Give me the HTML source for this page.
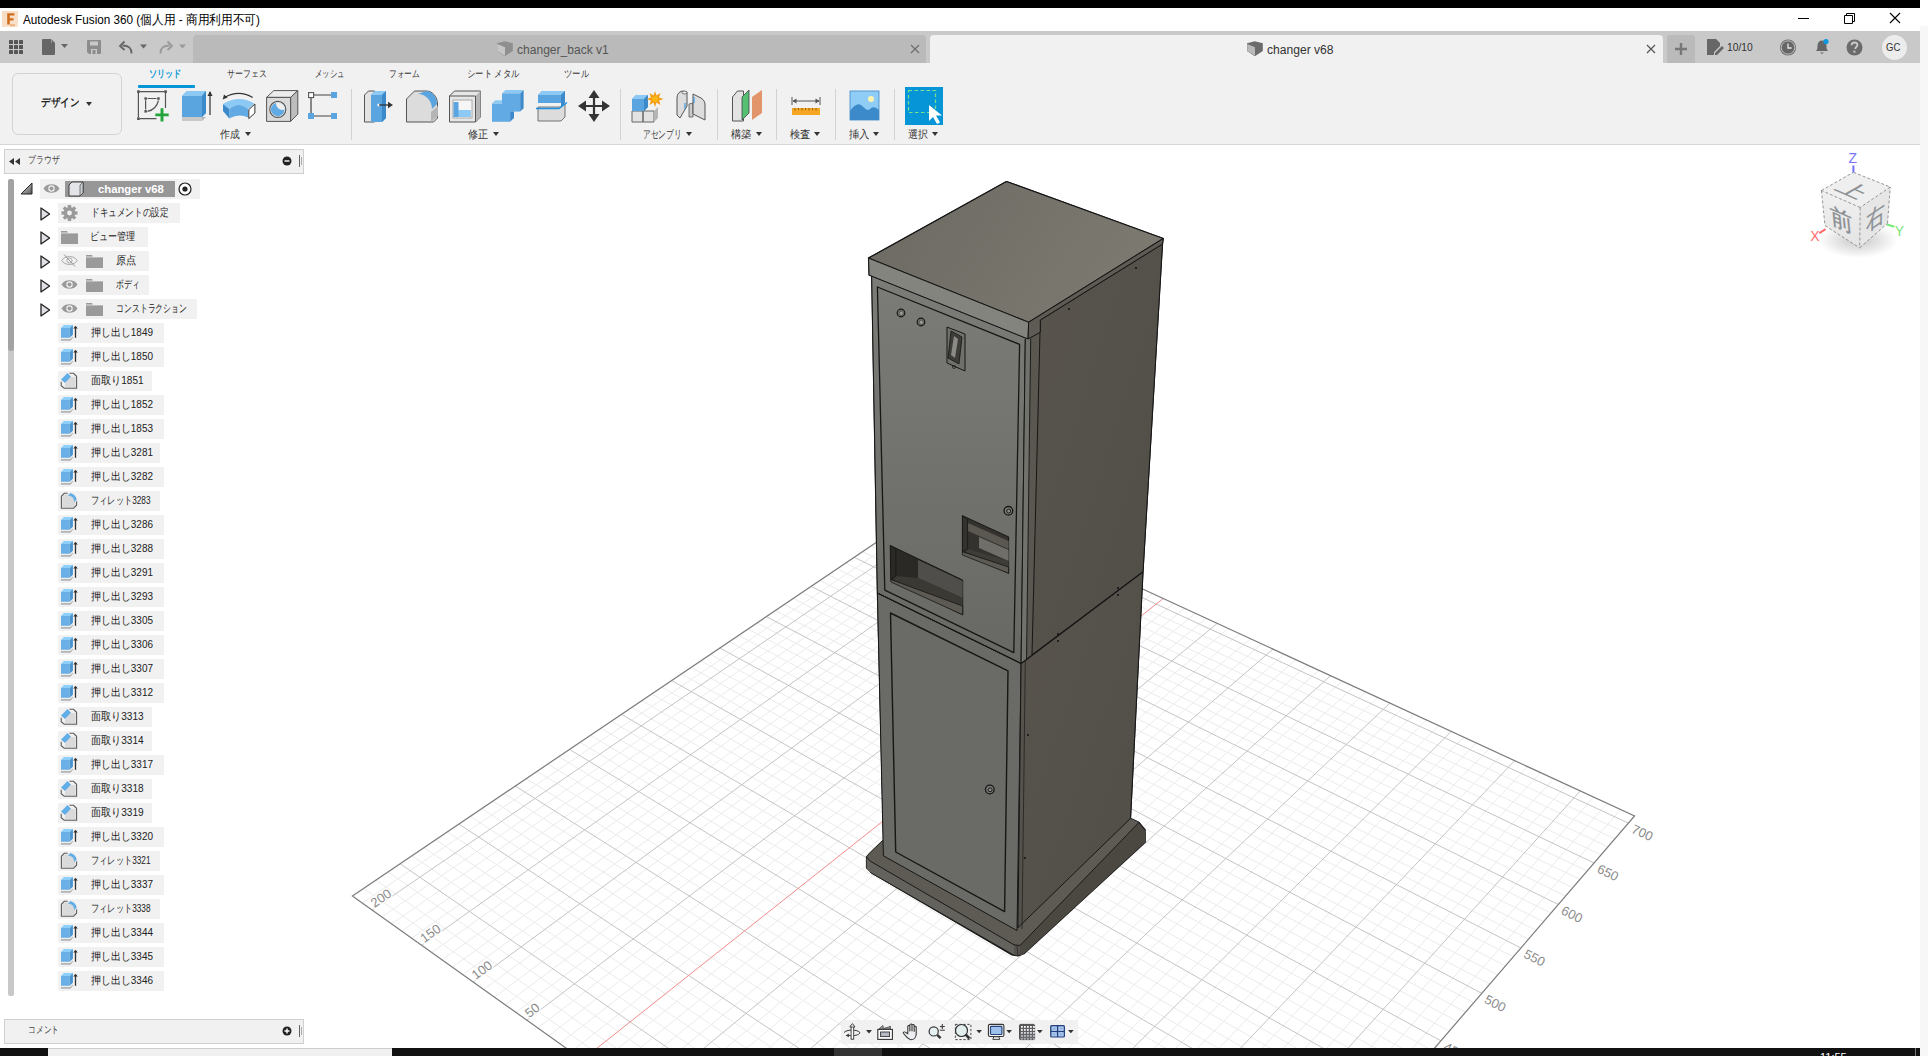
<!DOCTYPE html><html><head><meta charset="utf-8"><style>
*{margin:0;padding:0;box-sizing:border-box}
html,body{width:1928px;height:1056px;overflow:hidden;background:#f7f7f7;font-family:"Liberation Sans",sans-serif;color:#222}
.a{position:absolute}
.t{position:absolute;white-space:nowrap;line-height:1}
svg{position:absolute;overflow:visible}
</style></head><body>

<div class="a" style="left:0;top:0;width:1920px;height:8px;background:#000"></div>
<div class="a" style="left:1920px;top:0;width:8px;height:26px;background:#fff"></div>
<div class="a" style="left:0;top:8px;width:1920px;height:23px;background:#fff"></div>
<svg style="left:2px;top:11px" width="16" height="16"><defs><linearGradient id="fg" x1="0" y1="0" x2="1" y2="1"><stop offset="0" stop-color="#f8dcc2"/><stop offset="1" stop-color="#f9e3cf"/></linearGradient></defs><rect width="16" height="16" fill="url(#fg)"/><path d="M5.2 2.2h7.2v2.4H7.8v2.6h3.7v2.3H7.8v4H5.2z" fill="#cf6d1e"/><rect x="8" y="13.2" width="5" height="2" fill="#f0b27a"/></svg>
<div class="t" id="t0" style="left:23px;top:12.5px;font-size:13px;color:#000;font-weight:normal;transform-origin:0 0;transform:scaleX(0.9012);">Autodesk Fusion 360 (個人用 - 商用利用不可)</div>
<svg style="left:1790px;top:10px" width="120" height="18"><path d="M8 8.5h11" stroke="#000" stroke-width="1"/><path d="M54.5 5.5h8v8h-8z M56.5 5.5v-2h8v8h-2" stroke="#000" fill="none" stroke-width="1"/><path d="M100 3l10 10M110 3l-10 10" stroke="#000" stroke-width="1.1"/></svg>
<div class="a" style="left:0;top:31px;width:1920px;height:32px;background:#c9c9c9"></div>
<svg style="left:9px;top:40px" width="14" height="14"><rect x="0" y="0" width="4" height="4" rx="0.6" fill="#555"/><rect x="0" y="5" width="4" height="4" rx="0.6" fill="#555"/><rect x="0" y="10" width="4" height="4" rx="0.6" fill="#555"/><rect x="5" y="0" width="4" height="4" rx="0.6" fill="#555"/><rect x="5" y="5" width="4" height="4" rx="0.6" fill="#555"/><rect x="5" y="10" width="4" height="4" rx="0.6" fill="#555"/><rect x="10" y="0" width="4" height="4" rx="0.6" fill="#555"/><rect x="10" y="5" width="4" height="4" rx="0.6" fill="#555"/><rect x="10" y="10" width="4" height="4" rx="0.6" fill="#555"/></svg>
<svg style="left:42px;top:39px" width="30" height="17"><path d="M0 1a1 1 0 0 1 1-1h8l4 4v11a1 1 0 0 1-1 1H1a1 1 0 0 1-1-1z" fill="#666"/><path d="M9 0v4h4" fill="#c9c9c9"/><path d="M9.5 0.5l3.5 3.5h-3.5z" fill="#666"/><path d="M19 5h7l-3.5 4z" fill="#666"/></svg>
<svg style="left:87px;top:40px" width="14" height="14"><path d="M0 1a1 1 0 0 1 1-1h12a1 1 0 0 1 1 1v12a1 1 0 0 1-1 1H2l-2-2z" fill="#8c8c8c"/><rect x="3" y="1.5" width="8" height="4" fill="#c9c9c9"/><rect x="4" y="9" width="6" height="5" fill="#c9c9c9"/><rect x="5.5" y="10" width="3" height="4" fill="#8c8c8c"/></svg>
<svg style="left:119px;top:40px" width="30" height="15"><path d="M12.5 13.5c0-6-3-8-9-8" stroke="#666" stroke-width="1.8" fill="none"/><path d="M5.5 1.5l-4.5 4.5 4.5 4" stroke="#666" stroke-width="1.8" fill="none"/><path d="M21 4.5h7l-3.5 4z" fill="#666"/></svg>
<svg style="left:159px;top:40px" width="30" height="15"><path d="M1.5 13.5c0-6 3-8 9-8" stroke="#999" stroke-width="1.8" fill="none"/><path d="M8.5 1.5l4.5 4.5-4.5 4" stroke="#999" stroke-width="1.8" fill="none"/><path d="M20 4.5h7l-3.5 4z" fill="#999"/></svg>
<div class="a" style="left:193px;top:35px;width:733px;height:28px;background:#bababa;border-radius:4px 4px 0 0"></div>
<svg style="left:496px;top:41px" width="18" height="16"><path d="M1 2.3L8.8 0.2 16.8 2.3V10L8.8 15.2 1 10z" fill="#8f8f8f"/><path d="M1.2 2.9L9 6.2V14.8L1.2 9.9z" fill="#c6c6c6"/></svg>
<div class="t" id="t1" style="left:516.5px;top:44px;font-size:12.5px;color:#555;font-weight:normal;transform-origin:0 0;transform:scaleX(0.9643);">changer_back v1</div>
<svg style="left:910px;top:44px" width="10" height="10"><path d="M1 1l8 8M9 1l-8 8" stroke="#6e6e6e" stroke-width="1.2"/></svg>
<div class="a" style="left:930px;top:35px;width:733px;height:29px;background:#f1f1f1;border-radius:4px 4px 0 0"></div>
<svg style="left:1246px;top:41px" width="18" height="16"><path d="M1 2.3L8.8 0.2 16.8 2.3V10L8.8 15.2 1 10z" fill="#6b6b6b"/><path d="M1.2 2.9L9 6.2V14.8L1.2 9.9z" fill="#b9b9b9"/></svg>
<div class="t" id="t2" style="left:1266.5px;top:44px;font-size:12.5px;color:#333;font-weight:normal;transform-origin:0 0;transform:scaleX(0.9664);">changer v68</div>
<svg style="left:1646px;top:44px" width="10" height="10"><path d="M1 1l8 8M9 1l-8 8" stroke="#555" stroke-width="1.2"/></svg>
<div class="a" style="left:1667px;top:35px;width:28px;height:28px;background:#bababa;border-radius:3px 3px 0 0"></div>
<svg style="left:1674px;top:42px" width="14" height="14"><path d="M7 1v12M1 7h12" stroke="#777" stroke-width="2.4"/></svg>
<svg style="left:1707px;top:39px" width="18" height="17"><path d="M0 0h9l4 4v3l-6 6v3H0z" fill="#666"/><path d="M8 14l7-7 2 2-7 7h-2z" fill="#666"/></svg>
<div class="t" id="t3" style="left:1726.8px;top:42px;font-size:11.5px;color:#333;font-weight:normal;transform-origin:0 0;transform:scaleX(0.8929);">10/10</div>
<svg style="left:1779px;top:39px" width="18" height="18"><circle cx="9" cy="8.5" r="8" fill="#666"/><circle cx="9" cy="8.5" r="6.7" fill="none" stroke="#d8d8d8" stroke-width="0.8"/><path d="M9 4.5V9h3.6" stroke="#e6e6e6" stroke-width="1.3" fill="none"/></svg>
<svg style="left:1813px;top:38px" width="18" height="18"><path d="M3 13c1.5-1.5 1.5-3 1.5-5.5 0-3 2-5 4.5-5s4.5 2 4.5 5c0 2.5 0 4 1.5 5.5z" fill="#666"/><path d="M7 14.5h4l-2 1.5z" fill="#666"/><circle cx="13" cy="3.5" r="2.6" fill="#0b98de"/></svg>
<svg style="left:1846px;top:39px" width="17" height="17"><circle cx="8.5" cy="8.5" r="8" fill="#6b6b6b"/><path d="M5.6 6.3c0-1.8 1.3-2.8 2.9-2.8s2.9 1 2.9 2.6c0 1.8-2.2 2-2.2 3.9" stroke="#c9c9c9" stroke-width="1.8" fill="none"/><rect x="7.4" y="11.6" width="2" height="2" fill="#c9c9c9"/></svg>
<div class="a" style="left:1882px;top:35px;width:25px;height:25px;border-radius:50%;background:#ececec"></div>
<div class="t" id="t4" style="left:1885.7px;top:42px;font-size:11.5px;color:#333;font-weight:normal;transform-origin:0 0;transform:scaleX(0.8290);">GC</div>
<div class="a" style="left:0;top:63px;width:1920px;height:81px;background:#f1f1f1"></div>
<div class="a" style="left:0;top:144px;width:1920px;height:1px;background:#d6d6d6"></div>
<div class="a" style="left:12px;top:73px;width:110px;height:62px;border:1.5px solid #d4d4d4;border-radius:6px"></div>
<div class="t" id="t5" style="left:41.4px;top:97px;font-size:11px;color:#222;font-weight:bold;transform-origin:0 0;transform:scaleX(0.8636);">デザイン</div>
<svg style="left:85.5px;top:102px" width="8" height="5"><path d="M0 0h6l-3 4z" fill="#333"/></svg>
<div class="t" id="t6" style="left:149.4px;top:69px;font-size:10px;color:#0696d7;font-weight:bold;transform-origin:0 0;transform:scaleX(0.8150);">ソリッド</div>
<div class="t" id="t7" style="left:227.4px;top:69px;font-size:10px;color:#333;font-weight:normal;transform-origin:0 0;transform:scaleX(0.7920);">サーフェス</div>
<div class="t" id="t8" style="left:315px;top:69px;font-size:10px;color:#333;font-weight:normal;transform-origin:0 0;transform:scaleX(0.7375);">メッシュ</div>
<div class="t" id="t9" style="left:388.5px;top:69px;font-size:10px;color:#333;font-weight:normal;transform-origin:0 0;transform:scaleX(0.7725);">フォーム</div>
<div class="t" id="t10" style="left:466.8px;top:69px;font-size:10px;color:#333;font-weight:normal;transform-origin:0 0;transform:scaleX(0.8315);">シート メタル</div>
<div class="t" id="t11" style="left:564px;top:69px;font-size:10px;color:#333;font-weight:normal;transform-origin:0 0;transform:scaleX(0.8333);">ツール</div>
<div class="a" style="left:138px;top:85px;width:57px;height:3px;background:#0696d7;border-radius:1px"></div>
<div class="a" style="left:351px;top:89px;width:1px;height:51px;background:#d2d2d2"></div>
<div class="a" style="left:620px;top:89px;width:1px;height:51px;background:#d2d2d2"></div>
<div class="a" style="left:717px;top:89px;width:1px;height:51px;background:#d2d2d2"></div>
<div class="a" style="left:776px;top:89px;width:1px;height:51px;background:#d2d2d2"></div>
<div class="a" style="left:835px;top:89px;width:1px;height:51px;background:#d2d2d2"></div>
<div class="a" style="left:894px;top:89px;width:1px;height:51px;background:#d2d2d2"></div>
<div class="t" id="t12" style="left:220.3px;top:129px;font-size:11px;color:#333;font-weight:normal;transform-origin:0 0;transform:scaleX(0.8955);">作成</div>
<svg style="left:244.6px;top:132px" width="8" height="5"><path d="M0 0h6l-3 4z" fill="#333"/></svg>
<div class="t" id="t13" style="left:467.6px;top:129px;font-size:11px;color:#333;font-weight:normal;transform-origin:0 0;transform:scaleX(0.9182);">修正</div>
<svg style="left:492.5px;top:132px" width="8" height="5"><path d="M0 0h6l-3 4z" fill="#333"/></svg>
<div class="t" id="t14" style="left:643px;top:129px;font-size:11px;color:#333;font-weight:normal;transform-origin:0 0;transform:scaleX(0.7036);">アセンブリ</div>
<svg style="left:685.6px;top:132px" width="8" height="5"><path d="M0 0h6l-3 4z" fill="#333"/></svg>
<div class="t" id="t15" style="left:730.8px;top:129px;font-size:11px;color:#333;font-weight:normal;transform-origin:0 0;transform:scaleX(0.9364);">構築</div>
<svg style="left:755.5px;top:132px" width="8" height="5"><path d="M0 0h6l-3 4z" fill="#333"/></svg>
<div class="t" id="t16" style="left:789.8px;top:129px;font-size:11px;color:#333;font-weight:normal;transform-origin:0 0;transform:scaleX(0.9409);">検査</div>
<svg style="left:814.0px;top:132px" width="8" height="5"><path d="M0 0h6l-3 4z" fill="#333"/></svg>
<div class="t" id="t17" style="left:849px;top:129px;font-size:11px;color:#333;font-weight:normal;transform-origin:0 0;transform:scaleX(0.9364);">挿入</div>
<svg style="left:873.0px;top:132px" width="8" height="5"><path d="M0 0h6l-3 4z" fill="#333"/></svg>
<div class="t" id="t18" style="left:907.8px;top:129px;font-size:11px;color:#333;font-weight:normal;transform-origin:0 0;transform:scaleX(0.9091);">選択</div>
<svg style="left:931.8px;top:132px" width="8" height="5"><path d="M0 0h6l-3 4z" fill="#333"/></svg>
<svg style="left:137px;top:90px" width="34" height="34">
<g stroke="#555" stroke-width="1.2" fill="none"><path d="M3 1.6H27M1.4 3V27M3 28.6H19.5M28.5 3V18"/><path d="M10.5 8.5H19.5M8.6 10.2V19.5M10.5 21.3Q19 20 21.5 10.5"/></g>
<g fill="#555"><rect x="0.1" y="0.3" width="2.7" height="2.7"/><rect x="27.2" y="0.3" width="2.7" height="2.7"/><rect x="0.1" y="27.3" width="2.7" height="2.7"/>
<rect x="7.4" y="7.3" width="2.5" height="2.5"/><rect x="20.2" y="7.3" width="2.5" height="2.5"/><rect x="7.4" y="20.1" width="2.5" height="2.5"/></g>
<path d="M25 18.2v13.4M18.3 24.9h13.4" stroke="#22a43a" stroke-width="2.9"/></svg>
<svg style="left:181px;top:90px" width="32" height="33">
<path d="M1 27l3 4h17l4-4z" fill="#b5b5b5"/><path d="M1 27h20v4H1z" fill="#c9c9c9"/>
<path d="M1 6l5-5h19v22l-4 4H1z" fill="#5aa5e0"/><path d="M1 6l5-5h19l-4 5z" fill="#8ccaf5"/><path d="M21 6l4-5v22l-4 4z" fill="#3d8acb"/>
<path d="M29 2v23" stroke="#333" stroke-width="1.2"/><path d="M26.5 6l2.5-5 2.5 5z" fill="#333"/></svg>
<svg style="left:223px;top:92px" width="34" height="30">
<path d="M2 5.2Q15.7 -2.5 29.7 5.4" stroke="#333" stroke-width="1.1" fill="none"/><path d="M-0.3 7.6L1 2.6 4.6 5.6z" fill="#333"/>
<path d="M0 12Q15.7 2.5 31.3 11.5L25.2 17Q15.7 9 6.3 17Z" fill="#8ccaf5"/>
<path d="M6.3 17Q15.7 9 25.2 17V25.5Q15.7 21 6.3 26.6Z" fill="#62aae3"/>
<path d="M0 12L6.3 17V26.6L0 19Z" fill="#3d8acb"/>
<path d="M25.8 17.6L31.9 12V21L25.8 26.6Z" fill="#fff" stroke="#333" stroke-width="1"/></svg>
<svg style="left:266px;top:90px" width="33" height="33">
<path d="M0.6 7.4L7.8 0.6H31.8L24.6 7.4Z" fill="#ececec" stroke="#555" stroke-width="1" stroke-linejoin="round"/>
<path d="M24.6 7.4L31.8 0.6V24.2L24.6 31.4Z" fill="#bdbdbd" stroke="#555" stroke-width="1" stroke-linejoin="round"/>
<path d="M0.6 7.4H24.6V31.4H0.6Z" fill="#dadada" stroke="#555" stroke-width="1" stroke-linejoin="round"/>
<defs><clipPath id="hc"><circle cx="11.8" cy="19.4" r="7"/></clipPath></defs>
<circle cx="11.8" cy="19.4" r="8" fill="#eee" stroke="#555" stroke-width="1.1"/>
<g clip-path="url(#hc)"><circle cx="11.8" cy="19.4" r="7" fill="#62aae3"/><circle cx="16.5" cy="13.5" r="6.5" fill="#eee"/></g></svg>
<svg style="left:308px;top:92px" width="30" height="28">
<path d="M6 3h17M3 6v15M6 24h17" stroke="#444" stroke-width="1.2"/>
<rect x="0.6" y="0.6" width="5" height="5" fill="#fff" stroke="#555" stroke-width="1.1"/><rect x="23" y="0" width="6" height="6" fill="#5aa5e0"/>
<rect x="0" y="21" width="6" height="6" fill="#5aa5e0"/><rect x="23" y="21" width="6" height="6" fill="#5aa5e0"/></svg>
<svg style="left:364px;top:90px" width="30" height="33">
<path d="M0.5 5l4-4h6v31h-10z" fill="#e3e3e3" stroke="#555" stroke-width="1"/>
<path d="M7 5l4-4h11v27l-4 4H7z" fill="#5aa5e0"/><path d="M7 5l4-4h11l-4 4z" fill="#8ccaf5"/><path d="M18 5l4-4v27l-4 4z" fill="#3d8acb"/>
<rect x="13.5" y="13.8" width="2.5" height="2.4" fill="#fff"/><path d="M15 15h11" stroke="#333" stroke-width="1.3"/><path d="M24 11.8l5 3.2-5 3.2z" fill="#333"/></svg>
<svg style="left:406px;top:90px" width="33" height="33">
<path d="M0.5 9l8-8h12c6 0 11 6 11 13v14l-4 4H0.5z" fill="#dcdcdc" stroke="#555" stroke-width="1"/>
<path d="M25 32l7-6V16l-7 6z" fill="#b5b5b5"/>
<path d="M12 4l8-3c6 0 11 6 11 13l-5 5c0-8-6-15-14-15z" fill="#5aa5e0"/></svg>
<svg style="left:449px;top:90px" width="33" height="33">
<path d="M0.5 6l5-5h26v26l-5 5H0.5z" fill="#e6e6e6" stroke="#555" stroke-width="1"/>
<path d="M26.5 6l5-5v26l-5 5z" fill="#b5b5b5"/><path d="M0.5 6h26v26" fill="none" stroke="#555" stroke-width="1"/>
<rect x="4" y="10" width="19" height="18" fill="#f6f6f6" stroke="#999" stroke-width="0.8"/>
<path d="M4.5 12h5v8h12v7h-17z" fill="#5aa5e0"/><path d="M9.5 20h12v7H9.5z" fill="#8ccaf5"/></svg>
<svg style="left:492px;top:90px" width="33" height="33">
<path d="M10 3.4L13.4 0H31.6L28.2 3.4Z" fill="#8ccaf5"/><path d="M10 3.4H28.2V21.6H10Z" fill="#62aae3"/><path d="M28.2 3.4L31.6 0V18.2L28.2 21.6Z" fill="#3d8acb"/>
<path d="M0 13.6L3.4 10.2H10V13.6Z" fill="#8ccaf5"/><path d="M0 13.6H18.1V31.8H0Z" fill="#62aae3"/><path d="M18.1 21.6H22V28L18.1 31.8Z" fill="#3d8acb"/></svg>
<svg style="left:536px;top:90px" width="32" height="33">
<path d="M2 5l4-4h23v12H2z" fill="#5aa5e0"/><path d="M2 5l4-4h23l-4 4z" fill="#8ccaf5"/><path d="M25 5l4-4v12l-4 4z" fill="#3d8acb"/>
<path d="M2 17h23l4-3v13l-4 4H2z" fill="#dcdcdc" stroke="#555" stroke-width="0.8"/>
<path d="M0 18.5h23l8-6" stroke="#1d8fe0" stroke-width="1.5" fill="none"/></svg>
<svg style="left:578px;top:90px" width="32" height="32">
<path d="M16 3v26M3 16h26" stroke="#333" stroke-width="2.2"/>
<path d="M16 0l-5.5 8h11zM16 32l-5.5-8h11zM0 16l8-5.5v11zM32 16l-8-5.5v11z" fill="#333"/></svg>
<svg style="left:631px;top:90px" width="33" height="33">
<path d="M1 21h11v11H1zM12 21h11v11H12z" fill="#e3e3e3" stroke="#666" stroke-width="1"/><path d="M23 21l4-4v11l-4 4z" fill="#b5b5b5"/>
<path d="M3 17l4-4h14l-4 4z" fill="#eee"/>
<path d="M1 9l4-4h12v12l-4 4H1z" fill="#5aa5e0"/><path d="M1 9l4-4h12l-4 4z" fill="#8ccaf5"/><path d="M13 9l4-4v12l-4 4z" fill="#3d8acb"/>
<path d="M24 1l1.5 4.5 4-2.5-1.5 4.5 4.5 1.5-4.5 1.5 1.5 4.5-4-2.5-1.5 4.5-1.5-4.5-4 2.5 1.5-4.5-4.5-1.5 4.5-1.5-1.5-4.5 4 2.5z" fill="#f39c12"/><circle cx="24" cy="9" r="3" fill="#fdb813"/></svg>
<svg style="left:676px;top:90px" width="31" height="33">
<path d="M1 25V8c0-4 2-6 5-7l5 1v14l-7 12z" fill="#ddd" stroke="#555" stroke-width="1"/><ellipse cx="8.5" cy="2.5" rx="2.5" ry="1.5" fill="#eee" stroke="#555" stroke-width="0.8"/>
<path d="M13 14l4-1v14h-4z" fill="#ccc" stroke="#555" stroke-width="0.8"/>
<path d="M17 4l8 4c3 2 4 4 4 7v15l-12-6z" fill="#ddd" stroke="#555" stroke-width="1"/>
<path d="M9 13v6M18 7v6" stroke="#1d8fe0" stroke-width="1"/></svg>
<svg style="left:732px;top:90px" width="32" height="33">
<path d="M0.5 7l5-6h6v30h-11z" fill="#e3e3e3" stroke="#555" stroke-width="1"/>
<path d="M10 30V7l7-7v23z" fill="#55bf72" stroke="#444" stroke-width="0.8"/>
<path d="M20 30V7l10-7v23z" fill="#e2956a"/></svg>
<svg style="left:791px;top:97px" width="31" height="19">
<path d="M1 0v8M29 0v8" stroke="#555" stroke-width="1"/><path d="M2 4h26" stroke="#555" stroke-width="1"/><path d="M1.5 4l4-2.5v5zM28.5 4l-4-2.5v5z" fill="#555"/>
<rect x="1" y="11" width="28" height="7" fill="#f5a623"/><path d="M4 11v2.5M7.5 11v2M11 11v2.5M14.5 11v2M18 11v2.5M21.5 11v2M25 11v2.5" stroke="#8a5a00" stroke-width="0.9"/></svg>
<svg style="left:850px;top:91px" width="30" height="30">
<rect x="0" y="0" width="29" height="29" fill="#8fcdf7" stroke="#3d8acb" stroke-width="0.8"/>
<path d="M0 29V20c4-6 8-8 11-6 3 2 6 7 9 4 3-3 6-2 9 1v10z" fill="#3d8acb"/><circle cx="21" cy="8" r="3" fill="#fff3b0"/></svg>
<svg style="left:905px;top:87px" width="39" height="39">
<rect x="0" y="0" width="38" height="38" fill="#0696d7"/>
<rect x="3.5" y="3.5" width="27" height="22" fill="none" stroke="#7be08f" stroke-width="1.2" stroke-dasharray="3.5 2.5"/>
<path d="M24 18v16l4-4 4 7 3-1.5-4-7h6z" fill="#fff"/></svg>
<div class="a" style="left:0;top:145px;width:1920px;height:903px;background:#fff"></div>
<div class="a" style="left:4px;top:149px;width:300px;height:25px;background:#f1f1f1;border:1px solid #cfcfcf"></div>
<svg style="left:9px;top:158px" width="12" height="8"><path d="M5 0v7L0 3.5zM11 0v7L6 3.5z" fill="#333"/></svg>
<div class="t" id="t19" style="left:28.4px;top:155px;font-size:10px;color:#444;font-weight:normal;transform-origin:0 0;transform:scaleX(0.7950);">ブラウザ</div>
<svg style="left:282px;top:156px" width="10" height="10"><circle cx="5" cy="5" r="4.5" fill="#222"/><path d="M2.5 5h5" stroke="#fff" stroke-width="1.4"/></svg>
<div class="a" style="left:299px;top:155px;width:1px;height:12px;background:#666"></div><div class="a" style="left:301px;top:157px;width:1px;height:8px;background:#aaa"></div>
<div class="a" style="left:4px;top:1019px;width:300px;height:25px;background:#f1f1f1;border:1px solid #cfcfcf"></div>
<div class="t" id="t20" style="left:28.3px;top:1025px;font-size:10px;color:#444;font-weight:normal;transform-origin:0 0;transform:scaleX(0.7750);">コメント</div>
<svg style="left:282px;top:1026px" width="10" height="10"><circle cx="5" cy="5" r="4.5" fill="#222"/><path d="M2.5 5h5M5 2.5v5" stroke="#fff" stroke-width="1.4"/></svg>
<div class="a" style="left:299px;top:1025px;width:1px;height:12px;background:#666"></div><div class="a" style="left:301px;top:1027px;width:1px;height:8px;background:#aaa"></div>
<div class="a" style="left:8px;top:179px;width:6px;height:817px;background:#c8c8c8;border-radius:2px"></div>
<div class="a" style="left:8px;top:179px;width:6px;height:172px;background:#a3a3a3;border-radius:3px"></div>
<div class="a" style="left:40px;top:179px;width:160px;height:20px;background:#f1f1f1"></div>
<svg style="left:20px;top:182px" width="13" height="13"><defs><linearGradient id="trg" x1="0" y1="0" x2="1" y2="1"><stop offset="0" stop-color="#e8e8e8"/><stop offset="1" stop-color="#555"/></linearGradient></defs><path d="M1 12h11V1z" fill="url(#trg)" stroke="#222" stroke-width="1"/></svg>
<svg style="left:43px;top:182px" width="18" height="13"><path d="M0.5 6.5C3 0.8 14 0.8 16.5 6.5 14 12.2 3 12.2 0.5 6.5z" fill="#9a9a9a"/><circle cx="8.5" cy="6.5" r="3.2" fill="#f1f1f1"/><circle cx="8.5" cy="6.5" r="2" fill="#9a9a9a"/></svg>
<div class="a" style="left:65px;top:181px;width:110px;height:16px;background:#979797"></div>
<svg style="left:68px;top:181px" width="17" height="16"><path d="M1 4l3-3h11v11l-3 3H1z" fill="#e2e4e8" stroke="#333" stroke-width="0.9"/><path d="M12 4l3-3v11l-3 3z" fill="#c9ccd2" stroke="#333" stroke-width="0.6"/></svg>
<div class="t" id="t21" style="left:97.9px;top:184px;font-size:11px;color:#fff;font-weight:bold;transform-origin:0 0;transform:scaleX(1.0264);">changer v68</div>
<svg style="left:178px;top:182px" width="14" height="14"><circle cx="7" cy="7" r="6" fill="#fff" stroke="#222" stroke-width="1.2"/><circle cx="7" cy="7" r="2.6" fill="#222"/></svg>
<svg style="left:40px;top:206.5px" width="12" height="14"><path d="M1 1l8.6 6-8.6 6z" fill="#dfe1e5" stroke="#222" stroke-width="1.3" stroke-linejoin="round"/></svg>
<div class="a" style="left:58px;top:203px;width:122px;height:20px;background:#f1f1f1"></div>
<svg style="left:61px;top:205px" width="17" height="17"><circle cx="8.5" cy="8" r="5.9" fill="#9a9a9a"/><rect x="6.8" y="0" width="3.4" height="4" transform="rotate(0 8.5 8)" fill="#9a9a9a"/><rect x="6.8" y="0" width="3.4" height="4" transform="rotate(45 8.5 8)" fill="#9a9a9a"/><rect x="6.8" y="0" width="3.4" height="4" transform="rotate(90 8.5 8)" fill="#9a9a9a"/><rect x="6.8" y="0" width="3.4" height="4" transform="rotate(135 8.5 8)" fill="#9a9a9a"/><rect x="6.8" y="0" width="3.4" height="4" transform="rotate(180 8.5 8)" fill="#9a9a9a"/><rect x="6.8" y="0" width="3.4" height="4" transform="rotate(225 8.5 8)" fill="#9a9a9a"/><rect x="6.8" y="0" width="3.4" height="4" transform="rotate(270 8.5 8)" fill="#9a9a9a"/><rect x="6.8" y="0" width="3.4" height="4" transform="rotate(315 8.5 8)" fill="#9a9a9a"/><circle cx="8.5" cy="8" r="2.4" fill="#f1f1f1"/></svg>
<div class="t" id="t22" style="left:91px;top:207px;font-size:11px;color:#222;font-weight:normal;transform-origin:0 0;transform:scaleX(0.7838);">ドキュメントの設定</div>
<svg style="left:40px;top:230.5px" width="12" height="14"><path d="M1 1l8.6 6-8.6 6z" fill="#dfe1e5" stroke="#222" stroke-width="1.3" stroke-linejoin="round"/></svg>
<div class="a" style="left:58px;top:227px;width:90px;height:20px;background:#f1f1f1"></div>
<svg style="left:61px;top:230px" width="17" height="14"><path d="M0 1h6l1 2h10v11H0z" fill="#9a9a9a"/><path d="M0 3h17" stroke="#f1f1f1" stroke-width="0.8"/></svg>
<div class="t" id="t23" style="left:90px;top:231px;font-size:11px;color:#222;font-weight:normal;transform-origin:0 0;transform:scaleX(0.8255);">ビュー管理</div>
<svg style="left:40px;top:254.5px" width="12" height="14"><path d="M1 1l8.6 6-8.6 6z" fill="#dfe1e5" stroke="#222" stroke-width="1.3" stroke-linejoin="round"/></svg>
<div class="a" style="left:58px;top:251px;width:91px;height:20px;background:#f1f1f1"></div>
<svg style="left:61px;top:254px" width="18" height="13"><path d="M0.8 6.5C3.5 1.2 13.5 1.2 16.2 6.5 13.5 11.8 3.5 11.8 0.8 6.5z" fill="none" stroke="#aaa" stroke-width="1"/><circle cx="8.5" cy="6.5" r="2.6" fill="none" stroke="#aaa" stroke-width="1"/><path d="M3 0.5l11 12" stroke="#999" stroke-width="1"/></svg>
<svg style="left:86px;top:254px" width="17" height="14"><path d="M0 1h6l1 2h10v11H0z" fill="#9a9a9a"/><path d="M0 3h17" stroke="#f1f1f1" stroke-width="0.8"/></svg>
<div class="t" id="t24" style="left:115.5px;top:255px;font-size:11px;color:#222;font-weight:normal;transform-origin:0 0;transform:scaleX(0.9318);">原点</div>
<svg style="left:40px;top:278.5px" width="12" height="14"><path d="M1 1l8.6 6-8.6 6z" fill="#dfe1e5" stroke="#222" stroke-width="1.3" stroke-linejoin="round"/></svg>
<div class="a" style="left:58px;top:275px;width:91px;height:20px;background:#f1f1f1"></div>
<svg style="left:61px;top:278px" width="18" height="13"><path d="M0.5 6.5C3 0.8 14 0.8 16.5 6.5 14 12.2 3 12.2 0.5 6.5z" fill="#9a9a9a"/><circle cx="8.5" cy="6.5" r="3.2" fill="#f1f1f1"/><circle cx="8.5" cy="6.5" r="2" fill="#9a9a9a"/></svg>
<svg style="left:86px;top:278px" width="17" height="14"><path d="M0 1h6l1 2h10v11H0z" fill="#9a9a9a"/><path d="M0 3h17" stroke="#f1f1f1" stroke-width="0.8"/></svg>
<div class="t" id="t25" style="left:115.5px;top:279px;font-size:11px;color:#222;font-weight:normal;transform-origin:0 0;transform:scaleX(0.7182);">ボディ</div>
<svg style="left:40px;top:302.5px" width="12" height="14"><path d="M1 1l8.6 6-8.6 6z" fill="#dfe1e5" stroke="#222" stroke-width="1.3" stroke-linejoin="round"/></svg>
<div class="a" style="left:58px;top:299px;width:139px;height:20px;background:#f1f1f1"></div>
<svg style="left:61px;top:302px" width="18" height="13"><path d="M0.5 6.5C3 0.8 14 0.8 16.5 6.5 14 12.2 3 12.2 0.5 6.5z" fill="#9a9a9a"/><circle cx="8.5" cy="6.5" r="3.2" fill="#f1f1f1"/><circle cx="8.5" cy="6.5" r="2" fill="#9a9a9a"/></svg>
<svg style="left:86px;top:302px" width="17" height="14"><path d="M0 1h6l1 2h10v11H0z" fill="#9a9a9a"/><path d="M0 3h17" stroke="#f1f1f1" stroke-width="0.8"/></svg>
<div class="t" id="t26" style="left:115.5px;top:303px;font-size:11px;color:#222;font-weight:normal;transform-origin:0 0;transform:scaleX(0.7172);">コンストラクション</div>
<div class="a" style="left:58px;top:323px;width:106px;height:20px;background:#f1f1f1"></div>
<svg style="left:61px;top:325px" width="18" height="17" overflow="visible"><path d="M0 14.1h9.2l2.7-2.5v1.2l-2.4 3H0z" fill="#b3b3b3"/><path d="M0 3h8.75v9.8H0z" fill="#6aafe6"/><path d="M0 3l2.9-3.1h9l-3.15 3.1z" fill="#8ccff8"/><path d="M8.75 3l3.15-3.1v9.6l-3.15 3.3z" fill="#4a95d0"/><path d="M14.5 2v10.8" stroke="#333" stroke-width="1.3"/><path d="M12.2 3.6l2.3-2.8 2.3 2.8z" fill="#333"/></svg>
<div class="t" id="t27" style="left:90.5px;top:327px;font-size:11px;color:#222;font-weight:normal;transform-origin:0 0;transform:scaleX(0.9053);">押し出し1849</div>
<div class="a" style="left:58px;top:347px;width:106px;height:20px;background:#f1f1f1"></div>
<svg style="left:61px;top:349px" width="18" height="17" overflow="visible"><path d="M0 14.1h9.2l2.7-2.5v1.2l-2.4 3H0z" fill="#b3b3b3"/><path d="M0 3h8.75v9.8H0z" fill="#6aafe6"/><path d="M0 3l2.9-3.1h9l-3.15 3.1z" fill="#8ccff8"/><path d="M8.75 3l3.15-3.1v9.6l-3.15 3.3z" fill="#4a95d0"/><path d="M14.5 2v10.8" stroke="#333" stroke-width="1.3"/><path d="M12.2 3.6l2.3-2.8 2.3 2.8z" fill="#333"/></svg>
<div class="t" id="t28" style="left:90.5px;top:351px;font-size:11px;color:#222;font-weight:normal;transform-origin:0 0;transform:scaleX(0.9053);">押し出し1850</div>
<div class="a" style="left:58px;top:371px;width:94px;height:20px;background:#f1f1f1"></div>
<svg style="left:61px;top:373px" width="18" height="17" overflow="visible"><path d="M4 14.5V10l6-6h4.6v10.5z" fill="#dadada"/><path d="M0.2 8.7V12.8L3.3 15.3H15.6V3.25L12.5 0.3H8.5" fill="none" stroke="#5c5c5c" stroke-width="1.1"/><path d="M0 6.4L6.5 0.1 10 3.7 4 9.9z" fill="#62ade6"/></svg>
<div class="t" id="t29" style="left:90.5px;top:375px;font-size:11px;color:#222;font-weight:normal;transform-origin:0 0;transform:scaleX(0.9168);">面取り1851</div>
<div class="a" style="left:58px;top:395px;width:106px;height:20px;background:#f1f1f1"></div>
<svg style="left:61px;top:397px" width="18" height="17" overflow="visible"><path d="M0 14.1h9.2l2.7-2.5v1.2l-2.4 3H0z" fill="#b3b3b3"/><path d="M0 3h8.75v9.8H0z" fill="#6aafe6"/><path d="M0 3l2.9-3.1h9l-3.15 3.1z" fill="#8ccff8"/><path d="M8.75 3l3.15-3.1v9.6l-3.15 3.3z" fill="#4a95d0"/><path d="M14.5 2v10.8" stroke="#333" stroke-width="1.3"/><path d="M12.2 3.6l2.3-2.8 2.3 2.8z" fill="#333"/></svg>
<div class="t" id="t30" style="left:90.5px;top:399px;font-size:11px;color:#222;font-weight:normal;transform-origin:0 0;transform:scaleX(0.9053);">押し出し1852</div>
<div class="a" style="left:58px;top:419px;width:106px;height:20px;background:#f1f1f1"></div>
<svg style="left:61px;top:421px" width="18" height="17" overflow="visible"><path d="M0 14.1h9.2l2.7-2.5v1.2l-2.4 3H0z" fill="#b3b3b3"/><path d="M0 3h8.75v9.8H0z" fill="#6aafe6"/><path d="M0 3l2.9-3.1h9l-3.15 3.1z" fill="#8ccff8"/><path d="M8.75 3l3.15-3.1v9.6l-3.15 3.3z" fill="#4a95d0"/><path d="M14.5 2v10.8" stroke="#333" stroke-width="1.3"/><path d="M12.2 3.6l2.3-2.8 2.3 2.8z" fill="#333"/></svg>
<div class="t" id="t31" style="left:90.5px;top:423px;font-size:11px;color:#222;font-weight:normal;transform-origin:0 0;transform:scaleX(0.9053);">押し出し1853</div>
<div class="a" style="left:58px;top:443px;width:102px;height:20px;background:#f1f1f1"></div>
<svg style="left:61px;top:445px" width="18" height="17" overflow="visible"><path d="M0 14.1h9.2l2.7-2.5v1.2l-2.4 3H0z" fill="#b3b3b3"/><path d="M0 3h8.75v9.8H0z" fill="#6aafe6"/><path d="M0 3l2.9-3.1h9l-3.15 3.1z" fill="#8ccff8"/><path d="M8.75 3l3.15-3.1v9.6l-3.15 3.3z" fill="#4a95d0"/><path d="M14.5 2v10.8" stroke="#333" stroke-width="1.3"/><path d="M12.2 3.6l2.3-2.8 2.3 2.8z" fill="#333"/></svg>
<div class="t" id="t32" style="left:90.5px;top:447px;font-size:11px;color:#222;font-weight:normal;transform-origin:0 0;transform:scaleX(0.9053);">押し出し3281</div>
<div class="a" style="left:58px;top:467px;width:106px;height:20px;background:#f1f1f1"></div>
<svg style="left:61px;top:469px" width="18" height="17" overflow="visible"><path d="M0 14.1h9.2l2.7-2.5v1.2l-2.4 3H0z" fill="#b3b3b3"/><path d="M0 3h8.75v9.8H0z" fill="#6aafe6"/><path d="M0 3l2.9-3.1h9l-3.15 3.1z" fill="#8ccff8"/><path d="M8.75 3l3.15-3.1v9.6l-3.15 3.3z" fill="#4a95d0"/><path d="M14.5 2v10.8" stroke="#333" stroke-width="1.3"/><path d="M12.2 3.6l2.3-2.8 2.3 2.8z" fill="#333"/></svg>
<div class="t" id="t33" style="left:90.5px;top:471px;font-size:11px;color:#222;font-weight:normal;transform-origin:0 0;transform:scaleX(0.9053);">押し出し3282</div>
<div class="a" style="left:58px;top:491px;width:102px;height:20px;background:#f1f1f1"></div>
<svg style="left:61px;top:493px" width="18" height="17" overflow="visible"><path d="M1.5 14.5V4l2.5-2.5h3c4 1 7 4 7.5 8v5z" fill="#dadada"/><path d="M6.7 0.3H3.3L0.4 3.25V15.3H12.5L15.6 12.2V8.25" fill="none" stroke="#5c5c5c" stroke-width="1.1"/><path d="M9.4 -0.1A9 9 0 0 1 15.8 6.4L13.3 8.9A6.5 6.5 0 0 0 6.9 2.4z" fill="#62ade6"/></svg>
<div class="t" id="t34" style="left:90.5px;top:495px;font-size:11px;color:#222;font-weight:normal;transform-origin:0 0;transform:scaleX(0.7486);">フィレット3283</div>
<div class="a" style="left:58px;top:515px;width:106px;height:20px;background:#f1f1f1"></div>
<svg style="left:61px;top:517px" width="18" height="17" overflow="visible"><path d="M0 14.1h9.2l2.7-2.5v1.2l-2.4 3H0z" fill="#b3b3b3"/><path d="M0 3h8.75v9.8H0z" fill="#6aafe6"/><path d="M0 3l2.9-3.1h9l-3.15 3.1z" fill="#8ccff8"/><path d="M8.75 3l3.15-3.1v9.6l-3.15 3.3z" fill="#4a95d0"/><path d="M14.5 2v10.8" stroke="#333" stroke-width="1.3"/><path d="M12.2 3.6l2.3-2.8 2.3 2.8z" fill="#333"/></svg>
<div class="t" id="t35" style="left:90.5px;top:519px;font-size:11px;color:#222;font-weight:normal;transform-origin:0 0;transform:scaleX(0.9053);">押し出し3286</div>
<div class="a" style="left:58px;top:539px;width:106px;height:20px;background:#f1f1f1"></div>
<svg style="left:61px;top:541px" width="18" height="17" overflow="visible"><path d="M0 14.1h9.2l2.7-2.5v1.2l-2.4 3H0z" fill="#b3b3b3"/><path d="M0 3h8.75v9.8H0z" fill="#6aafe6"/><path d="M0 3l2.9-3.1h9l-3.15 3.1z" fill="#8ccff8"/><path d="M8.75 3l3.15-3.1v9.6l-3.15 3.3z" fill="#4a95d0"/><path d="M14.5 2v10.8" stroke="#333" stroke-width="1.3"/><path d="M12.2 3.6l2.3-2.8 2.3 2.8z" fill="#333"/></svg>
<div class="t" id="t36" style="left:90.5px;top:543px;font-size:11px;color:#222;font-weight:normal;transform-origin:0 0;transform:scaleX(0.9053);">押し出し3288</div>
<div class="a" style="left:58px;top:563px;width:106px;height:20px;background:#f1f1f1"></div>
<svg style="left:61px;top:565px" width="18" height="17" overflow="visible"><path d="M0 14.1h9.2l2.7-2.5v1.2l-2.4 3H0z" fill="#b3b3b3"/><path d="M0 3h8.75v9.8H0z" fill="#6aafe6"/><path d="M0 3l2.9-3.1h9l-3.15 3.1z" fill="#8ccff8"/><path d="M8.75 3l3.15-3.1v9.6l-3.15 3.3z" fill="#4a95d0"/><path d="M14.5 2v10.8" stroke="#333" stroke-width="1.3"/><path d="M12.2 3.6l2.3-2.8 2.3 2.8z" fill="#333"/></svg>
<div class="t" id="t37" style="left:90.5px;top:567px;font-size:11px;color:#222;font-weight:normal;transform-origin:0 0;transform:scaleX(0.9053);">押し出し3291</div>
<div class="a" style="left:58px;top:587px;width:106px;height:20px;background:#f1f1f1"></div>
<svg style="left:61px;top:589px" width="18" height="17" overflow="visible"><path d="M0 14.1h9.2l2.7-2.5v1.2l-2.4 3H0z" fill="#b3b3b3"/><path d="M0 3h8.75v9.8H0z" fill="#6aafe6"/><path d="M0 3l2.9-3.1h9l-3.15 3.1z" fill="#8ccff8"/><path d="M8.75 3l3.15-3.1v9.6l-3.15 3.3z" fill="#4a95d0"/><path d="M14.5 2v10.8" stroke="#333" stroke-width="1.3"/><path d="M12.2 3.6l2.3-2.8 2.3 2.8z" fill="#333"/></svg>
<div class="t" id="t38" style="left:90.5px;top:591px;font-size:11px;color:#222;font-weight:normal;transform-origin:0 0;transform:scaleX(0.9053);">押し出し3293</div>
<div class="a" style="left:58px;top:611px;width:106px;height:20px;background:#f1f1f1"></div>
<svg style="left:61px;top:613px" width="18" height="17" overflow="visible"><path d="M0 14.1h9.2l2.7-2.5v1.2l-2.4 3H0z" fill="#b3b3b3"/><path d="M0 3h8.75v9.8H0z" fill="#6aafe6"/><path d="M0 3l2.9-3.1h9l-3.15 3.1z" fill="#8ccff8"/><path d="M8.75 3l3.15-3.1v9.6l-3.15 3.3z" fill="#4a95d0"/><path d="M14.5 2v10.8" stroke="#333" stroke-width="1.3"/><path d="M12.2 3.6l2.3-2.8 2.3 2.8z" fill="#333"/></svg>
<div class="t" id="t39" style="left:90.5px;top:615px;font-size:11px;color:#222;font-weight:normal;transform-origin:0 0;transform:scaleX(0.9053);">押し出し3305</div>
<div class="a" style="left:58px;top:635px;width:106px;height:20px;background:#f1f1f1"></div>
<svg style="left:61px;top:637px" width="18" height="17" overflow="visible"><path d="M0 14.1h9.2l2.7-2.5v1.2l-2.4 3H0z" fill="#b3b3b3"/><path d="M0 3h8.75v9.8H0z" fill="#6aafe6"/><path d="M0 3l2.9-3.1h9l-3.15 3.1z" fill="#8ccff8"/><path d="M8.75 3l3.15-3.1v9.6l-3.15 3.3z" fill="#4a95d0"/><path d="M14.5 2v10.8" stroke="#333" stroke-width="1.3"/><path d="M12.2 3.6l2.3-2.8 2.3 2.8z" fill="#333"/></svg>
<div class="t" id="t40" style="left:90.5px;top:639px;font-size:11px;color:#222;font-weight:normal;transform-origin:0 0;transform:scaleX(0.9053);">押し出し3306</div>
<div class="a" style="left:58px;top:659px;width:106px;height:20px;background:#f1f1f1"></div>
<svg style="left:61px;top:661px" width="18" height="17" overflow="visible"><path d="M0 14.1h9.2l2.7-2.5v1.2l-2.4 3H0z" fill="#b3b3b3"/><path d="M0 3h8.75v9.8H0z" fill="#6aafe6"/><path d="M0 3l2.9-3.1h9l-3.15 3.1z" fill="#8ccff8"/><path d="M8.75 3l3.15-3.1v9.6l-3.15 3.3z" fill="#4a95d0"/><path d="M14.5 2v10.8" stroke="#333" stroke-width="1.3"/><path d="M12.2 3.6l2.3-2.8 2.3 2.8z" fill="#333"/></svg>
<div class="t" id="t41" style="left:90.5px;top:663px;font-size:11px;color:#222;font-weight:normal;transform-origin:0 0;transform:scaleX(0.9053);">押し出し3307</div>
<div class="a" style="left:58px;top:683px;width:106px;height:20px;background:#f1f1f1"></div>
<svg style="left:61px;top:685px" width="18" height="17" overflow="visible"><path d="M0 14.1h9.2l2.7-2.5v1.2l-2.4 3H0z" fill="#b3b3b3"/><path d="M0 3h8.75v9.8H0z" fill="#6aafe6"/><path d="M0 3l2.9-3.1h9l-3.15 3.1z" fill="#8ccff8"/><path d="M8.75 3l3.15-3.1v9.6l-3.15 3.3z" fill="#4a95d0"/><path d="M14.5 2v10.8" stroke="#333" stroke-width="1.3"/><path d="M12.2 3.6l2.3-2.8 2.3 2.8z" fill="#333"/></svg>
<div class="t" id="t42" style="left:90.5px;top:687px;font-size:11px;color:#222;font-weight:normal;transform-origin:0 0;transform:scaleX(0.9053);">押し出し3312</div>
<div class="a" style="left:58px;top:707px;width:94px;height:20px;background:#f1f1f1"></div>
<svg style="left:61px;top:709px" width="18" height="17" overflow="visible"><path d="M4 14.5V10l6-6h4.6v10.5z" fill="#dadada"/><path d="M0.2 8.7V12.8L3.3 15.3H15.6V3.25L12.5 0.3H8.5" fill="none" stroke="#5c5c5c" stroke-width="1.1"/><path d="M0 6.4L6.5 0.1 10 3.7 4 9.9z" fill="#62ade6"/></svg>
<div class="t" id="t43" style="left:90.5px;top:711px;font-size:11px;color:#222;font-weight:normal;transform-origin:0 0;transform:scaleX(0.9168);">面取り3313</div>
<div class="a" style="left:58px;top:731px;width:94px;height:20px;background:#f1f1f1"></div>
<svg style="left:61px;top:733px" width="18" height="17" overflow="visible"><path d="M4 14.5V10l6-6h4.6v10.5z" fill="#dadada"/><path d="M0.2 8.7V12.8L3.3 15.3H15.6V3.25L12.5 0.3H8.5" fill="none" stroke="#5c5c5c" stroke-width="1.1"/><path d="M0 6.4L6.5 0.1 10 3.7 4 9.9z" fill="#62ade6"/></svg>
<div class="t" id="t44" style="left:90.5px;top:735px;font-size:11px;color:#222;font-weight:normal;transform-origin:0 0;transform:scaleX(0.9168);">面取り3314</div>
<div class="a" style="left:58px;top:755px;width:106px;height:20px;background:#f1f1f1"></div>
<svg style="left:61px;top:757px" width="18" height="17" overflow="visible"><path d="M0 14.1h9.2l2.7-2.5v1.2l-2.4 3H0z" fill="#b3b3b3"/><path d="M0 3h8.75v9.8H0z" fill="#6aafe6"/><path d="M0 3l2.9-3.1h9l-3.15 3.1z" fill="#8ccff8"/><path d="M8.75 3l3.15-3.1v9.6l-3.15 3.3z" fill="#4a95d0"/><path d="M14.5 2v10.8" stroke="#333" stroke-width="1.3"/><path d="M12.2 3.6l2.3-2.8 2.3 2.8z" fill="#333"/></svg>
<div class="t" id="t45" style="left:90.5px;top:759px;font-size:11px;color:#222;font-weight:normal;transform-origin:0 0;transform:scaleX(0.9053);">押し出し3317</div>
<div class="a" style="left:58px;top:779px;width:94px;height:20px;background:#f1f1f1"></div>
<svg style="left:61px;top:781px" width="18" height="17" overflow="visible"><path d="M4 14.5V10l6-6h4.6v10.5z" fill="#dadada"/><path d="M0.2 8.7V12.8L3.3 15.3H15.6V3.25L12.5 0.3H8.5" fill="none" stroke="#5c5c5c" stroke-width="1.1"/><path d="M0 6.4L6.5 0.1 10 3.7 4 9.9z" fill="#62ade6"/></svg>
<div class="t" id="t46" style="left:90.5px;top:783px;font-size:11px;color:#222;font-weight:normal;transform-origin:0 0;transform:scaleX(0.9168);">面取り3318</div>
<div class="a" style="left:58px;top:803px;width:94px;height:20px;background:#f1f1f1"></div>
<svg style="left:61px;top:805px" width="18" height="17" overflow="visible"><path d="M4 14.5V10l6-6h4.6v10.5z" fill="#dadada"/><path d="M0.2 8.7V12.8L3.3 15.3H15.6V3.25L12.5 0.3H8.5" fill="none" stroke="#5c5c5c" stroke-width="1.1"/><path d="M0 6.4L6.5 0.1 10 3.7 4 9.9z" fill="#62ade6"/></svg>
<div class="t" id="t47" style="left:90.5px;top:807px;font-size:11px;color:#222;font-weight:normal;transform-origin:0 0;transform:scaleX(0.9168);">面取り3319</div>
<div class="a" style="left:58px;top:827px;width:106px;height:20px;background:#f1f1f1"></div>
<svg style="left:61px;top:829px" width="18" height="17" overflow="visible"><path d="M0 14.1h9.2l2.7-2.5v1.2l-2.4 3H0z" fill="#b3b3b3"/><path d="M0 3h8.75v9.8H0z" fill="#6aafe6"/><path d="M0 3l2.9-3.1h9l-3.15 3.1z" fill="#8ccff8"/><path d="M8.75 3l3.15-3.1v9.6l-3.15 3.3z" fill="#4a95d0"/><path d="M14.5 2v10.8" stroke="#333" stroke-width="1.3"/><path d="M12.2 3.6l2.3-2.8 2.3 2.8z" fill="#333"/></svg>
<div class="t" id="t48" style="left:90.5px;top:831px;font-size:11px;color:#222;font-weight:normal;transform-origin:0 0;transform:scaleX(0.9053);">押し出し3320</div>
<div class="a" style="left:58px;top:851px;width:102px;height:20px;background:#f1f1f1"></div>
<svg style="left:61px;top:853px" width="18" height="17" overflow="visible"><path d="M1.5 14.5V4l2.5-2.5h3c4 1 7 4 7.5 8v5z" fill="#dadada"/><path d="M6.7 0.3H3.3L0.4 3.25V15.3H12.5L15.6 12.2V8.25" fill="none" stroke="#5c5c5c" stroke-width="1.1"/><path d="M9.4 -0.1A9 9 0 0 1 15.8 6.4L13.3 8.9A6.5 6.5 0 0 0 6.9 2.4z" fill="#62ade6"/></svg>
<div class="t" id="t49" style="left:90.5px;top:855px;font-size:11px;color:#222;font-weight:normal;transform-origin:0 0;transform:scaleX(0.7486);">フィレット3321</div>
<div class="a" style="left:58px;top:875px;width:106px;height:20px;background:#f1f1f1"></div>
<svg style="left:61px;top:877px" width="18" height="17" overflow="visible"><path d="M0 14.1h9.2l2.7-2.5v1.2l-2.4 3H0z" fill="#b3b3b3"/><path d="M0 3h8.75v9.8H0z" fill="#6aafe6"/><path d="M0 3l2.9-3.1h9l-3.15 3.1z" fill="#8ccff8"/><path d="M8.75 3l3.15-3.1v9.6l-3.15 3.3z" fill="#4a95d0"/><path d="M14.5 2v10.8" stroke="#333" stroke-width="1.3"/><path d="M12.2 3.6l2.3-2.8 2.3 2.8z" fill="#333"/></svg>
<div class="t" id="t50" style="left:90.5px;top:879px;font-size:11px;color:#222;font-weight:normal;transform-origin:0 0;transform:scaleX(0.9053);">押し出し3337</div>
<div class="a" style="left:58px;top:899px;width:102px;height:20px;background:#f1f1f1"></div>
<svg style="left:61px;top:901px" width="18" height="17" overflow="visible"><path d="M1.5 14.5V4l2.5-2.5h3c4 1 7 4 7.5 8v5z" fill="#dadada"/><path d="M6.7 0.3H3.3L0.4 3.25V15.3H12.5L15.6 12.2V8.25" fill="none" stroke="#5c5c5c" stroke-width="1.1"/><path d="M9.4 -0.1A9 9 0 0 1 15.8 6.4L13.3 8.9A6.5 6.5 0 0 0 6.9 2.4z" fill="#62ade6"/></svg>
<div class="t" id="t51" style="left:90.5px;top:903px;font-size:11px;color:#222;font-weight:normal;transform-origin:0 0;transform:scaleX(0.7486);">フィレット3338</div>
<div class="a" style="left:58px;top:923px;width:106px;height:20px;background:#f1f1f1"></div>
<svg style="left:61px;top:925px" width="18" height="17" overflow="visible"><path d="M0 14.1h9.2l2.7-2.5v1.2l-2.4 3H0z" fill="#b3b3b3"/><path d="M0 3h8.75v9.8H0z" fill="#6aafe6"/><path d="M0 3l2.9-3.1h9l-3.15 3.1z" fill="#8ccff8"/><path d="M8.75 3l3.15-3.1v9.6l-3.15 3.3z" fill="#4a95d0"/><path d="M14.5 2v10.8" stroke="#333" stroke-width="1.3"/><path d="M12.2 3.6l2.3-2.8 2.3 2.8z" fill="#333"/></svg>
<div class="t" id="t52" style="left:90.5px;top:927px;font-size:11px;color:#222;font-weight:normal;transform-origin:0 0;transform:scaleX(0.9053);">押し出し3344</div>
<div class="a" style="left:58px;top:947px;width:106px;height:20px;background:#f1f1f1"></div>
<svg style="left:61px;top:949px" width="18" height="17" overflow="visible"><path d="M0 14.1h9.2l2.7-2.5v1.2l-2.4 3H0z" fill="#b3b3b3"/><path d="M0 3h8.75v9.8H0z" fill="#6aafe6"/><path d="M0 3l2.9-3.1h9l-3.15 3.1z" fill="#8ccff8"/><path d="M8.75 3l3.15-3.1v9.6l-3.15 3.3z" fill="#4a95d0"/><path d="M14.5 2v10.8" stroke="#333" stroke-width="1.3"/><path d="M12.2 3.6l2.3-2.8 2.3 2.8z" fill="#333"/></svg>
<div class="t" id="t53" style="left:90.5px;top:951px;font-size:11px;color:#222;font-weight:normal;transform-origin:0 0;transform:scaleX(0.9053);">押し出し3345</div>
<div class="a" style="left:58px;top:971px;width:106px;height:20px;background:#f1f1f1"></div>
<svg style="left:61px;top:973px" width="18" height="17" overflow="visible"><path d="M0 14.1h9.2l2.7-2.5v1.2l-2.4 3H0z" fill="#b3b3b3"/><path d="M0 3h8.75v9.8H0z" fill="#6aafe6"/><path d="M0 3l2.9-3.1h9l-3.15 3.1z" fill="#8ccff8"/><path d="M8.75 3l3.15-3.1v9.6l-3.15 3.3z" fill="#4a95d0"/><path d="M14.5 2v10.8" stroke="#333" stroke-width="1.3"/><path d="M12.2 3.6l2.3-2.8 2.3 2.8z" fill="#333"/></svg>
<div class="t" id="t54" style="left:90.5px;top:975px;font-size:11px;color:#222;font-weight:normal;transform-origin:0 0;transform:scaleX(0.9053);">押し出し3346</div>
<svg style="left:0;top:0;width:1920px;height:1048px;overflow:hidden" width="1920" height="1048" viewBox="0 0 1920 1048"><defs><clipPath id="vp"><rect x="0" y="145" width="1920" height="903"/></clipPath></defs><g clip-path="url(#vp)"><path d="M1115.0 1419.2L363.6 888.3M1126.6 1405.7L375.8 880.0M1138.0 1392.4L388.0 871.8M1160.6 1366.2L412.0 855.6M1171.7 1353.3L423.9 847.6M1182.7 1340.6L435.6 839.7M1193.6 1327.9L447.3 831.8M1215.0 1303.1L470.3 816.3M1225.5 1290.9L481.7 808.6M1235.9 1278.8L493.0 801.0M1246.3 1266.8L504.2 793.5M1266.6 1243.2L526.3 778.5M1276.6 1231.6L537.2 771.2M1286.5 1220.1L548.0 763.9M1296.3 1208.7L558.8 756.6M1315.6 1186.2L580.0 742.3M1325.2 1175.2L590.5 735.2M1334.6 1164.2L600.9 728.2M1343.9 1153.4L611.3 721.2M1362.3 1132.0L631.7 707.4M1371.4 1121.5L641.8 700.6M1380.4 1111.1L651.8 693.9M1389.3 1100.8L661.8 687.2M1406.8 1080.4L681.4 673.9M1415.5 1070.4L691.1 667.3M1424.0 1060.4L700.8 660.8M1432.5 1050.6L710.3 654.4M1449.2 1031.1L729.3 641.6M1457.5 1021.6L738.6 635.3M1465.7 1012.1L747.9 629.0M1473.8 1002.7L757.1 622.8M1489.8 984.1L775.4 610.5M1497.7 974.9L784.4 604.4M1505.5 965.9L793.3 598.4M1513.2 956.9L802.2 592.4M1528.5 939.1L819.8 580.5M1536.1 930.4L828.5 574.7M1543.5 921.7L837.1 568.8M1551.0 913.1L845.7 563.1M1565.6 896.1L862.7 551.6M1572.8 887.7L871.1 545.9M1580.0 879.4L879.4 540.3M1587.1 871.1L887.7 534.7M1601.1 854.9L904.1 523.7M1608.0 846.8L912.2 518.2M1614.9 838.9L920.2 512.8M1621.7 831.0L928.2 507.4M1104.1 1431.3L1634.4 815.8M1088.4 1420.2L1620.7 809.5M1072.8 1409.1L1607.1 803.3M1057.4 1398.1L1593.7 797.1M1026.9 1376.4L1567.0 784.8M1011.9 1365.7L1553.8 778.7M997.1 1355.1L1540.6 772.6M982.3 1344.6L1527.6 766.6M953.2 1323.9L1501.8 754.7M938.9 1313.7L1489.1 748.8M924.6 1303.5L1476.4 743.0M910.5 1293.5L1463.8 737.1M882.7 1273.7L1438.8 725.6M868.9 1263.9L1426.5 719.9M855.3 1254.2L1414.2 714.3M841.8 1244.5L1402.0 708.7M815.1 1225.5L1377.9 697.5M801.9 1216.1L1365.9 692.0M788.9 1206.8L1354.0 686.5M775.9 1197.6L1342.2 681.1M750.3 1179.4L1318.8 670.3M737.7 1170.4L1307.3 665.0M725.2 1161.5L1295.8 659.6M712.7 1152.6L1284.3 654.4M688.2 1135.1L1261.7 643.9M676.1 1126.5L1250.5 638.8M664.0 1117.9L1239.3 633.6M652.1 1109.4L1228.2 628.5M628.5 1092.6L1206.3 618.4M616.8 1084.3L1195.4 613.4M605.3 1076.0L1184.6 608.4M593.8 1067.9L1173.9 603.4M571.1 1051.7L1152.6 593.6M559.9 1043.7L1142.0 588.7M548.8 1035.8L1131.5 583.9M537.8 1028.0L1121.1 579.1M515.9 1012.4L1100.5 569.6M505.2 1004.7L1090.2 564.8M494.5 997.1L1080.1 560.2M483.8 989.5L1070.0 555.5M462.8 974.6L1049.9 546.2M452.4 967.2L1040.0 541.7M442.1 959.8L1030.1 537.1M431.9 952.5L1020.3 532.6M411.7 938.1L1000.8 523.6M401.7 931.0L991.2 519.2M391.7 923.9L981.6 514.7M381.9 916.9L972.1 510.3M362.3 903.0L953.1 501.6M352.7 896.1L943.8 497.3" stroke="#ebebeb" stroke-width="1" fill="none"/>
<path d="M1149.4 1379.2L400.1 863.7M1204.3 1315.5L458.9 824.0M1256.5 1254.9L515.3 786.0M1306.0 1197.4L569.5 749.4M1353.2 1142.7L621.5 714.3M1398.1 1090.5L671.6 680.5M1440.9 1040.8L719.8 648.0M1481.8 993.3L766.3 616.6M1520.9 948.0L811.1 586.4M1558.3 904.5L854.2 557.3M1594.1 863.0L895.9 529.2M1628.4 823.1L936.2 502.0M1042.1 1387.2L1580.3 790.9M967.7 1334.2L1514.7 760.6M896.6 1283.5L1451.3 731.4M828.4 1235.0L1389.9 703.1M763.1 1188.5L1330.5 675.7M700.4 1143.8L1273.0 649.1M640.2 1101.0L1217.2 623.4M526.8 1020.2L1110.8 574.3M473.3 982.0L1059.9 550.9M421.7 945.3L1010.5 528.1M372.1 909.9L962.6 506.0" stroke="#c4c4c4" stroke-width="1" fill="none"/>
<path d="M582.4 1059.8L1163.2 598.5" stroke="#f28c8c" stroke-width="1" fill="none"/>
<path d="M352.4 895.9L943.4 497.1L1634.6 816.0L1104.3 1431.5Z" stroke="#7d7d7d" stroke-width="1.2" fill="none"/>
<text x="0" y="0" transform="translate(529.3 1018.2) rotate(-37.4)" font-size="13" fill="#8a8a8a" font-family="Liberation Sans" stroke="#fff" stroke-width="3" paint-order="stroke">50</text>
<text x="0" y="0" transform="translate(475.8 980.0) rotate(-36.3)" font-size="13" fill="#8a8a8a" font-family="Liberation Sans" stroke="#fff" stroke-width="3" paint-order="stroke">100</text>
<text x="0" y="0" transform="translate(424.2 943.3) rotate(-35.3)" font-size="13" fill="#8a8a8a" font-family="Liberation Sans" stroke="#fff" stroke-width="3" paint-order="stroke">150</text>
<text x="0" y="0" transform="translate(374.6 907.9) rotate(-34.4)" font-size="13" fill="#8a8a8a" font-family="Liberation Sans" stroke="#fff" stroke-width="3" paint-order="stroke">200</text>
<text x="0" y="0" transform="translate(1446.9 1041.8) rotate(28.6)" font-size="13" fill="#8a8a8a" font-family="Liberation Sans" dy="9">450</text>
<text x="0" y="0" transform="translate(1487.8 994.3) rotate(27.8)" font-size="13" fill="#8a8a8a" font-family="Liberation Sans" dy="9">500</text>
<text x="0" y="0" transform="translate(1526.9 949.0) rotate(27.0)" font-size="13" fill="#8a8a8a" font-family="Liberation Sans" dy="9">550</text>
<text x="0" y="0" transform="translate(1564.3 905.5) rotate(26.3)" font-size="13" fill="#8a8a8a" font-family="Liberation Sans" dy="9">600</text>
<text x="0" y="0" transform="translate(1600.1 864.0) rotate(25.6)" font-size="13" fill="#8a8a8a" font-family="Liberation Sans" dy="9">650</text>
<text x="0" y="0" transform="translate(1634.4 824.1) rotate(24.9)" font-size="13" fill="#8a8a8a" font-family="Liberation Sans" dy="9">700</text>
<defs><linearGradient id="lidg" x1="0" y1="0" x2="1" y2="0.3"><stop offset="0" stop-color="#6c6962"/><stop offset="1" stop-color="#7c7971"/></linearGradient><linearGradient id="frontg" x1="0" y1="0" x2="0" y2="1"><stop offset="0" stop-color="#7b7c77"/><stop offset="1" stop-color="#686864"/></linearGradient><linearGradient id="frontg2" x1="0" y1="0" x2="0" y2="1"><stop offset="0" stop-color="#6c6c68"/><stop offset="1" stop-color="#61615d"/></linearGradient><linearGradient id="rightg" x1="0" y1="0" x2="1" y2="1"><stop offset="0" stop-color="#58544d"/><stop offset="1" stop-color="#514e48"/></linearGradient></defs>
<path d="M868.5 258.1L1006.5 181.5L1163.3 238.5L1162.5 244.0L1143.0 571.8L1130.5 818.4L1139.0 822.4L1145.2 830.0L1145.2 842.3L1024.0 953.7L1018.0 956.0L1012.0 955.0L873.0 873.8L866.5 868.0L866.5 857.0L870.0 853.0L883.5 840.0L877.4 593.0L871.7 276.0L869.1 275.1Z" fill="#55524b" stroke="#161616" stroke-width="1.2" stroke-linejoin="round" />
<path d="M866.6 857.0L870.0 853.0L883.5 840.0L884.2 855.2L1017.9 927.8L1130.5 818.4L1139.0 822.4L1020.0 945.5L1014.0 944.8L870.2 861.1Z" fill="#5e5b54" />
<path d="M870.2 861.1L1014.0 944.8L1014.0 955.2L870.2 872.4L866.6 869.0L866.6 857.0Z" fill="#63625c" />
<path d="M1020.0 945.5L1139.0 822.4L1145.0 830.0L1145.2 842.3L1024.0 953.7L1020.0 955.5Z" fill="#4b4842" />
<path d="M866.6 857.0L870.2 861.1L1014.0 944.8L1020.0 945.5L1139.0 822.4L1145.0 830.0" fill="none" stroke="#1a1a1a" stroke-width="1"/>
<path d="M870.2 872.4L1014.0 955.2" fill="none" stroke="#161616" stroke-width="0.9"/>
<path d="M1017.0 945.0L1018.0 956.0" fill="none" stroke="#2a2a2a" stroke-width="0.8"/>
<path d="M877.4 593.0L1021.1 663.5L1017.0 930.6L883.4 855.8Z" fill="#6a6a66" stroke="#161616" stroke-width="1" stroke-linejoin="round" />
<path d="M1021.1 663.5L1143.0 571.8L1130.5 818.4L1017.9 927.8Z" fill="url(#rightg)" stroke="#161616" stroke-width="1" stroke-linejoin="round" />
<path d="M1025.3 660.5L1022.0 929.0" fill="none" stroke="#222" stroke-width="0.8"/>
<path d="M890.5 613.0L1008.0 670.9L1004.6 911.6L895.7 852.0Z" fill="none" stroke="#161616" stroke-width="1.4" stroke-linejoin="round" />
<path d="M871.7 276.0L1028.1 339.0L1025.3 339.0L1021.1 663.5L877.4 593.0Z" fill="url(#frontg)" stroke="#161616" stroke-width="1" stroke-linejoin="round" />
<path d="M1025.3 339.0L1030.7 339.0L1026.5 659.3L1021.1 663.5Z" fill="#72726d" />
<path d="M1030.7 339.0L1040.3 332.0L1032.0 654.8L1026.5 659.3Z" fill="#5a5750" />
<path d="M1025.3 339.0L1021.1 663.5" fill="none" stroke="#161616" stroke-width="1"/>
<path d="M1030.7 339.0L1026.5 659.3" fill="none" stroke="#161616" stroke-width="0.9"/>
<path d="M1040.3 320.0L1162.5 244.0L1143.0 571.8L1032.0 654.8Z" fill="url(#rightg)" stroke="#161616" stroke-width="1" stroke-linejoin="round" />
<path d="M877.4 593.0L1021.1 663.5L1143.0 571.8" fill="none" stroke="#161616" stroke-width="1.1"/>
<path d="M877.4 287.0L1019.6 344.4L1013.8 652.7L884.8 590.2Z" fill="none" stroke="#161616" stroke-width="1.3" stroke-linejoin="round" />
<path d="M1006.5 181.5L1163.3 238.5L1028.6 322.3L868.5 258.1Z" fill="url(#lidg)" stroke="#161616" stroke-width="1.2" stroke-linejoin="round" />
<path d="M868.5 258.1L1028.6 322.3L1028.1 339.0L869.1 275.1Z" fill="#83847e" stroke="#161616" stroke-width="1" stroke-linejoin="round" />
<path d="M1028.6 322.3L1163.3 238.5L1162.5 244.0L1040.3 320.0L1040.3 332.2L1028.1 339.0Z" fill="#5e5b54" stroke="#161616" stroke-width="1" stroke-linejoin="round" />
<path d="M890.2 545.5L962.7 580.1L962.7 614.8L890.8 579.5Z" fill="#2b2926" stroke="#161616" stroke-width="1" stroke-linejoin="round" />
<path d="M918.0 560.0L962.7 581.0L962.7 598.0L918.0 578.0Z" fill="#4f4e4a" />
<path d="M895.9 576.0L918.0 578.0L962.7 598.0L962.7 606.0L893.0 580.0Z" fill="#3b3934" />
<path d="M890.8 579.5L962.7 606.0L962.7 614.8L890.8 582.0Z" fill="#5d5a53" stroke="#161616" stroke-width="0.8" stroke-linejoin="round" />
<path d="M890.2 545.5L895.9 549.0L895.9 576.0L890.8 579.5" fill="none" stroke="#161616" stroke-width="0.8"/>
<path d="M962.4 515.7L1008.6 536.9L1008.6 573.3L962.4 551.7Z" fill="#34322e" stroke="#161616" stroke-width="1" stroke-linejoin="round" />
<path d="M968.0 523.0L1008.6 541.0L1008.6 549.0L968.0 531.0Z" fill="#5b5852" />
<path d="M979.0 537.0L1008.6 550.0L1008.6 561.0L979.0 548.0Z" fill="#6f6e69" />
<path d="M967.6 549.0L1008.6 561.0L1008.6 567.0L966.0 552.0Z" fill="#3f3d38" />
<path d="M962.4 551.7L1008.6 567.0L1008.6 573.3L962.4 555.0Z" fill="#5d5a53" stroke="#161616" stroke-width="0.8" stroke-linejoin="round" />
<path d="M962.4 515.7L967.6 519.0L967.6 549.0L962.4 551.7" fill="none" stroke="#161616" stroke-width="0.8"/>
<circle cx="901" cy="313" r="3.8" fill="#6f6f6b" stroke="#161616" stroke-width="1.2"/><circle cx="901.3" cy="313.3" r="2" fill="#9d9d99" stroke="#333" stroke-width="0.5"/>
<circle cx="921" cy="322" r="3.8" fill="#6f6f6b" stroke="#161616" stroke-width="1.2"/><circle cx="921.3" cy="322.3" r="2" fill="#9d9d99" stroke="#333" stroke-width="0.5"/>
<path d="M947.0 327.0L965.0 334.0L965.0 371.0L947.0 363.0Z" fill="#6f6f6b" stroke="#161616" stroke-width="1" stroke-linejoin="round" />
<path d="M951.0 331.0L962.0 337.0L959.0 364.0L948.0 358.0Z" fill="#3d3c38" stroke="#161616" stroke-width="0.8" stroke-linejoin="round" />
<path d="M954.0 336.0L958.0 339.0L955.0 358.0L951.0 355.0Z" fill="#8b8b86" />
<circle cx="954" cy="367" r="1.5" fill="none" stroke="#161616" stroke-width="0.7"/>
<circle cx="1008.4" cy="510.8" r="4.3" fill="#7a7a76" stroke="#161616" stroke-width="1.3"/><circle cx="1008.6999999999999" cy="511.1" r="2" fill="#8a8a86" stroke="#161616" stroke-width="1"/>
<circle cx="989.8" cy="789.5" r="4.3" fill="#7a7a76" stroke="#161616" stroke-width="1.3"/><circle cx="990.0999999999999" cy="789.8" r="2" fill="#8a8a86" stroke="#161616" stroke-width="1"/>
<circle cx="1136" cy="268" r="1" fill="#111"/>
<circle cx="1069" cy="309" r="1" fill="#111"/>
<circle cx="1058" cy="634" r="1" fill="#111"/>
<circle cx="1058" cy="641" r="1" fill="#111"/>
<circle cx="1118" cy="588" r="1" fill="#111"/>
<circle cx="1118" cy="595" r="1" fill="#111"/>
<circle cx="1028" cy="735" r="1" fill="#111"/>
<circle cx="1025" cy="858" r="1" fill="#111"/>
<defs><radialGradient id="vcsh" cx="0.5" cy="0.5" r="0.5"><stop offset="0" stop-color="#000" stop-opacity="0.22"/><stop offset="1" stop-color="#000" stop-opacity="0"/></radialGradient>
<linearGradient id="vcf" x1="0" y1="0" x2="0" y2="1"><stop offset="0" stop-color="#f0f0f0"/><stop offset="1" stop-color="#e4e4e4"/></linearGradient></defs>
<ellipse cx="1858" cy="240" rx="40" ry="18" fill="url(#vcsh)"/>
<path d="M1853.4 172.3L1890.3 187.0L1860.2 207.5L1821.4 190.5Z" fill="#efefef" />
<path d="M1821.4 190.5L1860.2 207.5L1859.7 247.8L1825.0 225.7Z" fill="url(#vcf)" />
<path d="M1860.2 207.5L1890.3 187.0L1887.5 223.4L1859.7 247.8Z" fill="#e6e6e6" />
<path d="M1853.4 172.3L1890.3 187" stroke="#8a8a8a" stroke-width="0.9" stroke-dasharray="3 2" fill="none"/>
<path d="M1890.3 187L1860.2 207.5" stroke="#8a8a8a" stroke-width="0.9" stroke-dasharray="3 2" fill="none"/>
<path d="M1860.2 207.5L1821.4 190.5" stroke="#8a8a8a" stroke-width="0.9" stroke-dasharray="3 2" fill="none"/>
<path d="M1821.4 190.5L1853.4 172.3" stroke="#8a8a8a" stroke-width="0.9" stroke-dasharray="3 2" fill="none"/>
<path d="M1821.4 190.5L1825 225.7" stroke="#8a8a8a" stroke-width="0.9" stroke-dasharray="3 2" fill="none"/>
<path d="M1825 225.7L1859.7 247.8" stroke="#8a8a8a" stroke-width="0.9" stroke-dasharray="3 2" fill="none"/>
<path d="M1859.7 247.8L1887.5 223.4" stroke="#8a8a8a" stroke-width="0.9" stroke-dasharray="3 2" fill="none"/>
<path d="M1887.5 223.4L1890.3 187" stroke="#8a8a8a" stroke-width="0.9" stroke-dasharray="3 2" fill="none"/>
<path d="M1860.2 207.5L1859.7 247.8" stroke="#8a8a8a" stroke-width="0.9" stroke-dasharray="3 2" fill="none"/>
<text x="0" y="0" text-anchor="middle" dominant-baseline="central" transform="matrix(1.2028 0.5270 -0.9920 0.5642 1853.5 190)" font-size="20" fill="#8b8f94" stroke="#8b8f94" stroke-width="0.25">上</text>
<text x="0" y="0" text-anchor="middle" dominant-baseline="central" transform="matrix(1.1252 0.4930 0.1224 1.1968 1841 219)" font-size="20" fill="#8b8f94" stroke="#8b8f94" stroke-width="0.25">前</text>
<text x="0" y="0" text-anchor="middle" dominant-baseline="central" transform="matrix(0.9331 -0.6355 -0.0150 1.2090 1875 217)" font-size="20" fill="#8b8f94" stroke="#8b8f94" stroke-width="0.25">右</text>
<path d="M1853.4 165.5v6.8" stroke="#6f6fff" stroke-width="2"/><text x="1848.6" y="163.4" font-size="14" fill="#7373ff" font-family="Liberation Sans">Z</text>
<path d="M1819.3 233.2l6.3-4" stroke="#ff6a6a" stroke-width="2"/><text x="1810.3" y="241.2" font-size="14" fill="#ff6e6e" font-family="Liberation Sans">X</text>
<path d="M1887 224.5l7.3 2.3" stroke="#77ea77" stroke-width="2"/><text x="1894.8" y="235.5" font-size="14" fill="#78e878" font-family="Liberation Sans">Y</text></g></svg>
<div class="a" style="left:841px;top:1020px;width:237px;height:24px;background:rgba(240,240,240,0.92)"></div>
<svg style="left:841px;top:1020px" width="237" height="24">
<path d="M3 12.6C5 9.3 17 9.3 18.9 12.6 18.5 15 13 16.2 7.7 15.4" fill="none" stroke="#333" stroke-width="1"/>
<rect x="10.1" y="5.5" width="2.6" height="13.7" fill="#fff" stroke="#333" stroke-width="0.9"/>
<path d="M8.8 7L11.4 3.6 14 7z" fill="#fff" stroke="#333" stroke-width="0.9" stroke-linejoin="round"/>
<path d="M11.4 12.5v-0" stroke="#333"/><path d="M4.7 15.4L7.9 13.6V17.2z" fill="#333"/>
<path d="M25 10h6l-3 3.5z" fill="#333"/>
<path d="M37.8 9.2L41.8 5.4 42.5 8.4 47.2 7.2 49.4 6.2V9.2z" fill="#9a9a9a" stroke="#444" stroke-width="0.8" stroke-linejoin="round"/>
<rect x="36.8" y="9.4" width="14.6" height="10" fill="#fff" stroke="#333" stroke-width="1.1"/><rect x="39.6" y="12" width="9" height="4.6" fill="#b6bac6" stroke="#333" stroke-width="0.9"/>
<path transform="translate(62 4) scale(1.2 1)" d="M6.4 15.8C4 14.5 1.3 11 0.3 9.3-0.2 8.2 1 7.5 2 8.1L4 9.8V2.2C4 1.2 5.7 1.2 5.7 2.2V7 0.8C5.7-0.2 7.5-0.2 7.5 0.8V7 1.2C7.5 0.2 9.3 0.2 9.3 1.2V7.5 3C9.3 2 11 2 11 3V10C11 13.5 9 15.8 6.4 15.8z" fill="#eceef1" stroke="#333" stroke-width="0.9" stroke-linejoin="round"/>
<circle cx="92.7" cy="11.4" r="4.6" fill="#e6f0f0" stroke="#333" stroke-width="1.2"/><path d="M96.2 14.9l3.4 3.2" stroke="#333" stroke-width="2.4"/><path d="M98.8 6.6h5M101.3 4v5M98.8 10.2h5" stroke="#333" stroke-width="1"/>
<rect x="114.4" y="4.4" width="15.5" height="15.2" fill="none" stroke="#333" stroke-width="0.9" stroke-dasharray="2.2 1.8"/><circle cx="120.5" cy="10.5" r="6" fill="#e3efef" stroke="#333" stroke-width="1.2"/><path d="M124.8 14.6l3.6 3.9" stroke="#333" stroke-width="2.6"/>
<path d="M135.3 10.1h5.7l-2.85 3.2z" fill="#333"/>
<rect x="147.4" y="4.4" width="15.5" height="12.1" rx="1.5" fill="#f4f4f4" stroke="#333" stroke-width="1.1"/><rect x="149.5" y="6.4" width="11.4" height="8.1" rx="0.8" fill="#9ec1ee" stroke="#27457f" stroke-width="1.2"/><path d="M151.8 19.4l1-2.6h5l1 2.6z" fill="#f6f6f6" stroke="#333" stroke-width="0.9"/>
<path d="M165.3 10.1h5.7l-2.85 3.2z" fill="#333"/>
<defs><linearGradient id="gg" x1="0" y1="0" x2="0" y2="1"><stop offset="0" stop-color="#555"/><stop offset="1" stop-color="#6a6d75"/></linearGradient></defs>
<rect x="178.5" y="4.4" width="15.1" height="15.2" rx="1.2" fill="url(#gg)" stroke="#444" stroke-width="0.9"/><rect x="180.0" y="6.0" width="1.8" height="1.8" fill="#f8f8f8"/><rect x="180.0" y="9.0" width="1.8" height="1.8" fill="#f8f8f8"/><rect x="180.0" y="12.0" width="1.8" height="1.8" fill="#dcdcdc"/><rect x="180.0" y="15.0" width="1.8" height="1.8" fill="#bdbdbd"/><rect x="180.0" y="18.0" width="1.8" height="1.8" fill="#a8a8a8"/><rect x="183.0" y="6.0" width="1.8" height="1.8" fill="#f8f8f8"/><rect x="183.0" y="9.0" width="1.8" height="1.8" fill="#f8f8f8"/><rect x="183.0" y="12.0" width="1.8" height="1.8" fill="#dcdcdc"/><rect x="183.0" y="15.0" width="1.8" height="1.8" fill="#bdbdbd"/><rect x="183.0" y="18.0" width="1.8" height="1.8" fill="#a8a8a8"/><rect x="186.0" y="6.0" width="1.8" height="1.8" fill="#f8f8f8"/><rect x="186.0" y="9.0" width="1.8" height="1.8" fill="#f8f8f8"/><rect x="186.0" y="12.0" width="1.8" height="1.8" fill="#dcdcdc"/><rect x="186.0" y="15.0" width="1.8" height="1.8" fill="#bdbdbd"/><rect x="186.0" y="18.0" width="1.8" height="1.8" fill="#a8a8a8"/><rect x="189.0" y="6.0" width="1.8" height="1.8" fill="#f8f8f8"/><rect x="189.0" y="9.0" width="1.8" height="1.8" fill="#f8f8f8"/><rect x="189.0" y="12.0" width="1.8" height="1.8" fill="#dcdcdc"/><rect x="189.0" y="15.0" width="1.8" height="1.8" fill="#bdbdbd"/><rect x="189.0" y="18.0" width="1.8" height="1.8" fill="#a8a8a8"/><rect x="192.0" y="6.0" width="1.8" height="1.8" fill="#f8f8f8"/><rect x="192.0" y="9.0" width="1.8" height="1.8" fill="#f8f8f8"/><rect x="192.0" y="12.0" width="1.8" height="1.8" fill="#dcdcdc"/><rect x="192.0" y="15.0" width="1.8" height="1.8" fill="#bdbdbd"/><rect x="192.0" y="18.0" width="1.8" height="1.8" fill="#a8a8a8"/>
<path d="M196 10.1h5.7l-2.85 3.2z" fill="#333"/>
<rect x="209.1" y="5.1" width="14.9" height="12.5" rx="1.5" fill="#24417f"/><rect x="210.4" y="6.3" width="5.6" height="4.6" rx="0.6" fill="#a6c3ea"/><rect x="217.2" y="6.3" width="5.6" height="4.6" rx="0.6" fill="#a6c3ea"/><rect x="210.4" y="11.9" width="5.6" height="4.6" rx="0.6" fill="#a6c3ea"/><rect x="217.2" y="11.9" width="5.6" height="4.6" rx="0.6" fill="#a6c3ea"/>
<path d="M212.2 8.6h2M219 8.6h2M212.2 14.2h2M219 14.2h2" stroke="#7d9fd0" stroke-width="0.8"/>
<path d="M227 10.1h5.7l-2.85 3.2z" fill="#333"/>
</svg>
<div class="a" style="left:0;top:1048px;width:1920px;height:8px;background:#111"></div>
<div class="a" style="left:48px;top:1048px;width:344px;height:8px;background:#f0f0f0;border-top:1px solid #cdcdcd"></div>
<div class="a" style="left:834px;top:1048px;width:48px;height:8px;background:#333"></div>
<div class="t" style="left:1820px;top:1052px;font-size:11px;color:#fff">11:55</div>
<div class="a" style="left:1915px;top:1048px;width:1px;height:8px;background:#777"></div>
<script>(function(){var W={"0":237.0,"1":91.8,"2":66.5,"3":25.7,"4":14.3,"5":38.0,"6":32.6,"7":39.6,"8":29.5,"9":30.9,"10":52.2,"11":25.0,"12":19.7,"13":20.2,"14":38.7,"15":20.6,"16":20.7,"17":20.6,"18":20.0,"19":31.8,"20":31.0,"21":65.9,"22":77.6,"23":45.4,"24":20.5,"25":23.7,"26":71.0,"27":62.0,"28":62.0,"29":52.7,"30":62.0,"31":62.0,"32":62.0,"33":62.0,"34":59.5,"35":62.0,"36":62.0,"37":62.0,"38":62.0,"39":62.0,"40":62.0,"41":62.0,"42":62.0,"43":52.7,"44":52.7,"45":62.0,"46":52.7,"47":52.7,"48":62.0,"49":59.5,"50":62.0,"51":59.5,"52":62.0,"53":62.0,"54":62.0};for(var k in W){var e=document.getElementById("t"+k);if(!e)continue;var o=e.style.transform;e.style.transform="none";var w=e.getBoundingClientRect().width;e.style.transform=(w>0)?"scaleX("+(W[k]/w)+")":o;}})();</script>
</body></html>
